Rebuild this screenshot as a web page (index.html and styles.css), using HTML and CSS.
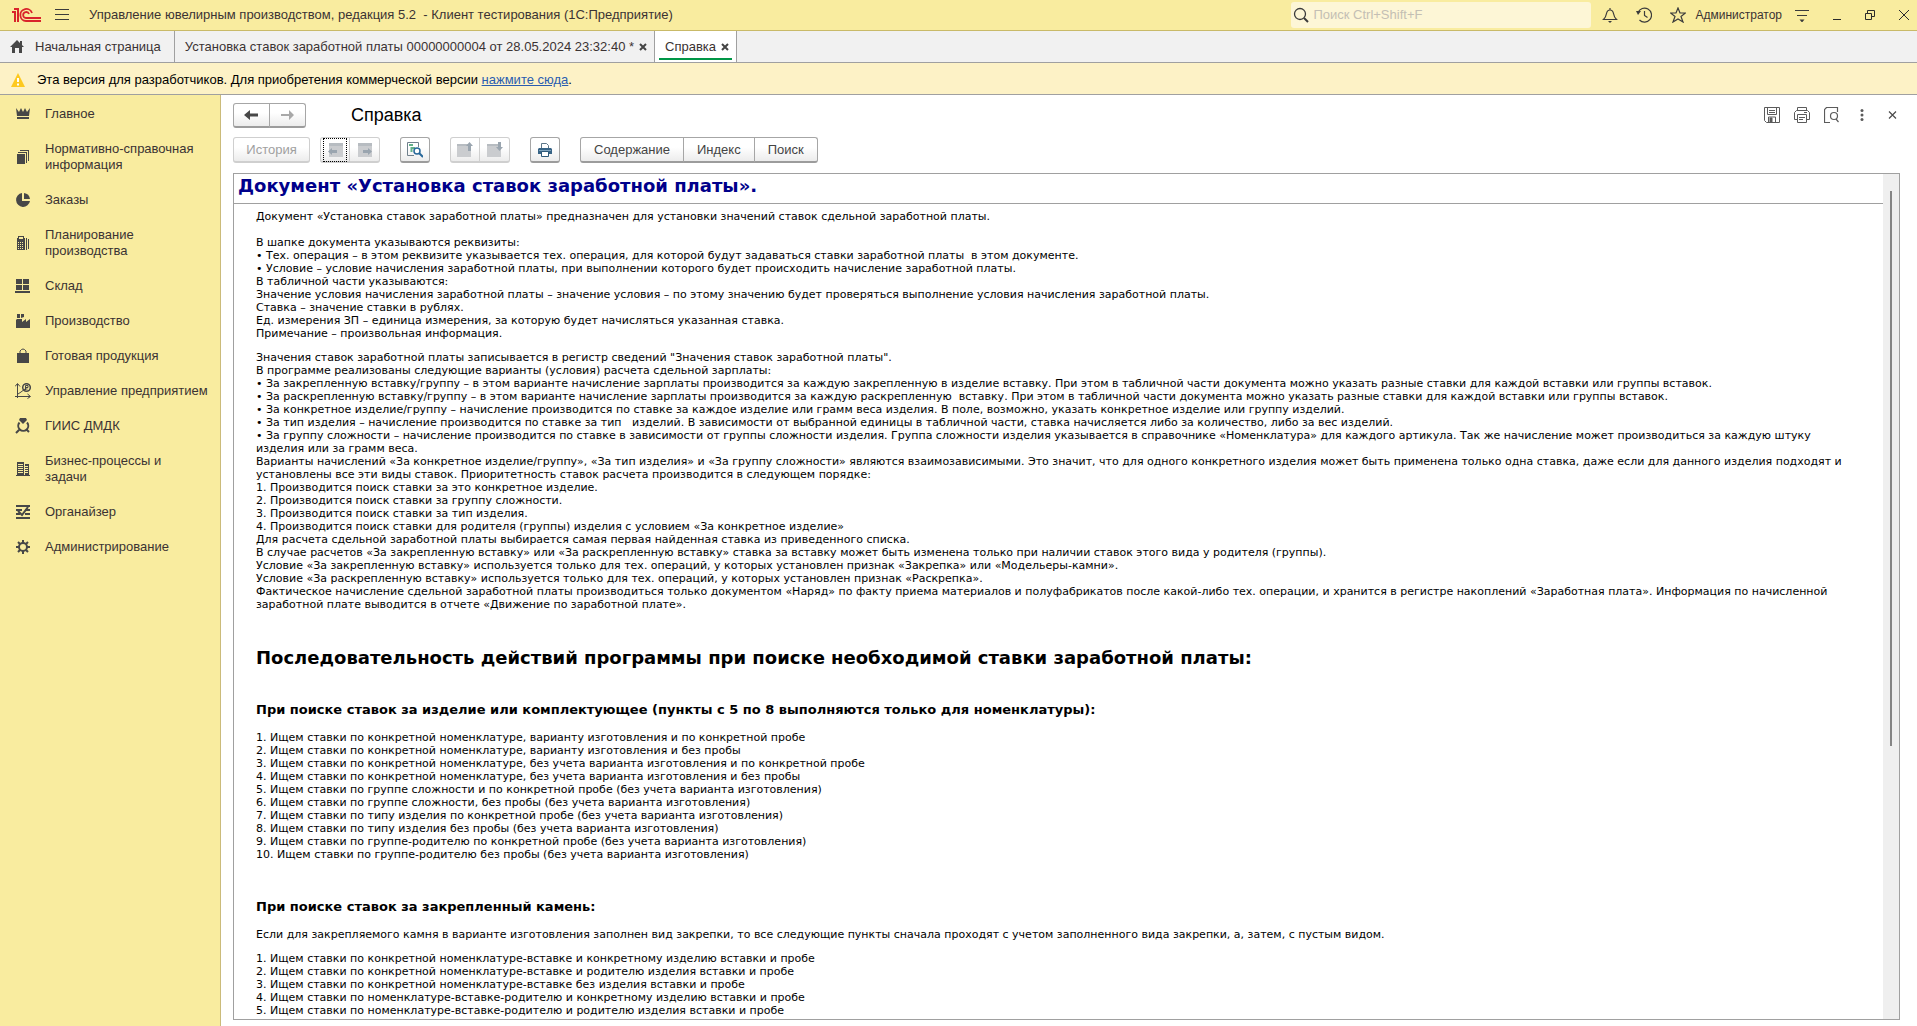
FILE: index.html
```html
<!DOCTYPE html>
<html lang="ru">
<head>
<meta charset="utf-8">
<title>Управление ювелирным производством, редакция 5.2</title>
<link rel="stylesheet" href="styles.css">
</head>
<body>
<header class="titlebar">
  <svg class="logo" width="30" height="16" viewBox="0 0 30 16" fill="none" stroke="#d9242b" stroke-width="2"><path d="M0 5h3v10M2 2h4v13"/><path d="M20 6A6 6 0 1 0 14 14h15M17 7A3 3 0 1 0 14 11h15" stroke-width="1.800"/></svg>
  <button class="icon-btn menu-btn" aria-label="Меню"><svg width="14" height="14" viewBox="0 0 14 14" stroke="#3b3b3b" stroke-width="1"><path d="M0 1.500h14M0 6.500h14M0 11.500h14"/></svg></button>
  <h1 class="app-title">Управление ювелирным производством, редакция 5.2&nbsp; - Клиент тестирования (1С:Предприятие)</h1>
  <div class="search">
    <svg width="16" height="16" viewBox="0 0 16 16" fill="none" stroke="#3b3b3b"><circle cx="7" cy="7" r="5.500" stroke-width="1.300"/><path d="m11 11 4 4" stroke-width="2"/></svg>
    <input type="text" placeholder="Поиск Ctrl+Shift+F" aria-label="Поиск">
  </div>
  <div class="tools">
    <button class="icon-btn" aria-label="Уведомления"><svg width="16" height="16" viewBox="0 0 16 16" fill="none" stroke="#3b3b3b" stroke-width="1.200"><path d="M1.500 12.500c2-2 2.500-3 3-6C5 4 6 3 8 3s3 1 3.500 3.500c.5 3 1 4 3 6zM8 3V1"/><path d="M6 14h4l-2 2z" fill="#3b3b3b" stroke="none"/></svg></button>
    <button class="icon-btn" aria-label="История"><svg width="16" height="16" viewBox="0 0 16 16" fill="none" stroke="#3b3b3b" stroke-width="1.200"><path d="M2 5.500A7 7 0 1 1 3.500 13M8.500 4v4.500l3 2"/><path d="M0 4h5L2 8z" fill="#3b3b3b" stroke="none"/></svg></button>
    <button class="icon-btn" aria-label="Избранное"><svg width="16" height="16" viewBox="0 0 16 16" fill="none" stroke="#3b3b3b" stroke-width="1.200"><path d="m8 1 2 5h5.500l-4.500 3.500 2 5.500L8 12l-5 3L5 9.500.500 6H6z"/></svg></button>
  </div>
  <span class="user">Администратор</span>
  <div class="window-tools">
    <button class="icon-btn" aria-label="Настройки"><svg width="14" height="14" viewBox="0 0 14 14" stroke="#3b3b3b" fill="#3b3b3b"><path d="M0 2.500h14M2 7.500h10"/><path d="M4.500 11.500h5l-2.500 3z" stroke="none"/></svg></button>
    <button class="icon-btn" aria-label="Свернуть"><svg width="10" height="12" viewBox="0 0 10 12" stroke="#2b2b2b"><path d="M1 10.500h8"/></svg></button>
    <button class="icon-btn" aria-label="Развернуть"><svg width="10" height="10" viewBox="0 0 10 10" fill="none" stroke="#2b2b2b"><path d="M.5 3.500h6v6h-6zM2.500 3V.5h7v6H7"/></svg></button>
    <button class="icon-btn" aria-label="Закрыть"><svg width="12" height="12" viewBox="0 0 12 12" stroke="#2b2b2b"><path d="m1 1 10 10M11 1 1 11"/></svg></button>
  </div>
</header>

<nav class="tabs" aria-label="Открытые окна">
  <div class="tab home"><svg width="14" height="14" viewBox="0 0 14 14" fill="#474747"><path d="M7 0 0 7h2v6h3V8h4v5h3V7h2l-2-2V1h-2v2z"/></svg><button class="tab-label">Начальная страница</button></div>
  <div class="tab"><button class="tab-label">Установка ставок заработной платы 00000000004 от 28.05.2024 23:32:40 *</button><button class="icon-btn" aria-label="Закрыть вкладку"><svg width="8" height="8" viewBox="0 0 8 8" stroke="#444" stroke-width="2"><path d="m1 1 6 6M7 1 1 7"/></svg></button></div>
  <div class="tab active"><button class="tab-label">Справка</button><button class="icon-btn" aria-label="Закрыть вкладку"><svg width="8" height="8" viewBox="0 0 8 8" stroke="#444" stroke-width="2"><path d="m1 1 6 6M7 1 1 7"/></svg></button></div>
</nav>

<div class="notice">
  <svg width="14" height="14" viewBox="0 0 14 14"><path d="M7 0 14 14H0z" fill="#fdc91f"/><path d="M7 5v4M7 10.500v2" stroke="#fff" stroke-width="2"/></svg>
  <p>Эта версия для разработчиков. Для приобретения коммерческой версии <a href="#">нажмите сюда</a>.</p>
</div>

<div class="workspace">
  <nav class="sidebar" aria-label="Разделы">
    <a href="#"><svg width="16" height="16" viewBox="0 0 16 16"><path d="M1 2l3 4 2-4 2 4 2-4 2 4 3-4-1 8H2zM2 11h12v2H2z"/></svg><span>Главное</span></a>
    <a href="#"><svg width="16" height="16" viewBox="0 0 16 16"><path d="M2 5h8v10H2zM3 3h9v11h-1V4H3zM5 1h9v11h-1V2H5z"/></svg><span>Нормативно-справочная информация</span></a>
    <a href="#"><svg width="16" height="16" viewBox="0 0 16 16"><path d="M7 1v8h8a7 7 0 1 1-8-8z"/><path d="M9 1a7 7 0 0 1 6 6H9z"/></svg><span>Заказы</span></a>
    <a href="#"><svg width="16" height="16" viewBox="0 0 16 16"><path d="M3 1h6v2h1v12H2V3h1zm1 1v2h4V2zM11 3h1v12h-1zM13 4h1v10h-1z"/><path d="M3 7h1v1H3zM5 7h1v1H5zM7 7h1v1H7zM3 9h1v1H3zM5 9h1v1H5zM7 9h1v1H7zM3 11h1v1H3zM5 11h1v1H5zM7 11h1v1H7zM3 13h1v1H3zM5 13h1v1H5zM7 13h1v1H7z" fill="#f9ec9f"/></svg><span>Планирование производства</span></a>
    <a href="#"><svg width="16" height="16" viewBox="0 0 16 16"><path d="M1 1h6v5H1zM8 1h6v5H8zM1 7h6v5H1zM8 7h6v5H8zM0 13h15v2H0z"/></svg><span>Склад</span></a>
    <a href="#"><svg width="16" height="16" viewBox="0 0 16 16"><path d="M1 15V7l1-1h5v3l4-3v3l4-3v9zM2 1h3v4H2zM6 1h3v3L6 5z"/></svg><span>Производство</span></a>
    <a href="#"><svg width="16" height="16" viewBox="0 0 16 16"><path d="M2 5h12v10H2z"/><path d="M5 7V3q3-4 6 0v4" fill="none" stroke="#474747"/></svg><span>Готовая продукция</span></a>
    <a href="#"><svg width="16" height="16" viewBox="0 0 16 16"><path d="M2.500 15V1M0 13.500h15M0 3.500l2.500-3 2.500 3M12.500 11l3 2.500-3 2M3 11l3-2 4-3" fill="none" stroke="#474747"/><circle cx="11.500" cy="4.500" r="3.800" fill="none" stroke="#474747" stroke-width="1.500"/><path d="M10.500 7V2.500H13v2h-3M10 6h2.500" fill="none" stroke="#474747"/></svg><span>Управление предприятием</span></a>
    <a href="#"><svg width="16" height="16" viewBox="0 0 16 16"><path d="M5 0h6l1 2-4 4-4-4z"/><path d="M4.500 4.500A5 5 0 1 0 12 4.500M1 15l3-3M12 12l2 2" fill="none" stroke="#474747" stroke-width="2"/></svg><span>ГИИС ДМДК</span></a>
    <a href="#"><svg width="16" height="16" viewBox="0 0 16 16"><path d="M2 1h7v13H2zM10 3h4v11h-4zM1 14h14v1H1z"/><path d="M3 3.500h5M3 5.500h5M3 7.500h5M3 9.500h5M3 11.500h5M10 5.500h3M10 7.500h3M10 9.500h3M10 11.500h3" stroke="#f9ec9f"/></svg><span>Бизнес-процессы и<br>задачи</span></a>
    <a href="#"><svg width="16" height="16" viewBox="0 0 16 16"><path d="M1 2h14M1 6h6M10 6h5M1 10h4M10 10h5M1 14h14M3 7l4 4 6-8" fill="none" stroke="#474747" stroke-width="2"/></svg><span>Органайзер</span></a>
    <a href="#"><svg width="16" height="16" viewBox="0 0 16 16" fill="none" stroke="#474747" stroke-width="2"><circle cx="8" cy="8" r="4" fill="none"/><path d="M8 1v3M8 12v3M1 8h3M12 8h3M3 3l2 2M11 11l2 2M13 3l-2 2M5 11l-2 2"/></svg><span>Администрирование</span></a>
  </nav>

  <main class="form">
    <div class="form-head">
      <div class="group">
        <button class="btn nav-btn" aria-label="Назад"><svg width="15" height="10" viewBox="0 0 15 10"><path d="M6 0v3.500h8v3H6V10L0 5z" fill="#474747"/></svg></button>
        <button class="btn nav-btn" aria-label="Вперед" disabled><svg width="15" height="10" viewBox="0 0 15 10"><path d="M9 0v4H1v2h8v4l5-5z" fill="#a8a8a8"/></svg></button>
      </div>
      <h2 class="form-title">Справка</h2>
      <div class="form-tools">
        <button class="icon-btn" aria-label="Сохранить"><svg width="16" height="16" viewBox="0 0 16 16" fill="none" stroke="#5b5b5b"><path d="M.5.5h15v15H2.500l-2-2zM3.500.5v7h9v-7M5 3.500h6M5 5.500h6M4.500 15v-5h7v5"/><path d="M6 11h2v4H6z" fill="#5b5b5b"/></svg></button>
        <button class="icon-btn" aria-label="Печать"><svg width="16" height="16" viewBox="0 0 16 16" fill="none" stroke="#5b5b5b"><path d="M3.500 3.500v-3h9v3M3.500 12.500h-3v-7l2-2h11l2 2v7h-3M3.500 7.500h9v8h-9zM5 10.500h6M5 12.500h4M10 5.500h3"/></svg></button>
        <button class="icon-btn" aria-label="Просмотр"><svg width="16" height="16" viewBox="0 0 16 16" fill="none" stroke="#5b5b5b"><path d="M6 15.500H.5V2.500l2-2h11V5M12 12l2.500 3" stroke-width="1.200"/><circle cx="10" cy="9" r="3.500" stroke-width="1.200"/></svg></button>
        <button class="icon-btn" aria-label="Еще"><svg width="16" height="16" viewBox="0 0 16 16" fill="#5b5b5b"><circle cx="8" cy="3.500" r="1.500"/><circle cx="8" cy="8" r="1.500"/><circle cx="8" cy="12.500" r="1.500"/></svg></button>
        <button class="icon-btn" aria-label="Закрыть"><svg width="16" height="16" viewBox="0 0 16 16" stroke="#4b4b4b" stroke-width="1.200"><path d="m5 4.500 7 7M12 4.500l-7 7"/></svg></button>
      </div>
    </div>

    <div class="toolbar">
      <button class="btn history" disabled>История</button>
      <div class="group">
        <button class="btn tool focused" aria-label="Предыдущая" disabled><svg width="16" height="16" viewBox="0 0 16 16"><path d="M2 1h14v14H2z" fill="#cacccf"/><path d="M2 1h14v3H2z" fill="#b7bcc1"/><path d="M5 6v2h5v3H5v2L1 9.500z" fill="#9aa5af"/></svg></button>
        <button class="btn tool" aria-label="Следующая" disabled><svg width="16" height="16" viewBox="0 0 16 16"><path d="M1 1h14v14H1z" fill="#cacccf"/><path d="M1 1h14v3H1z" fill="#b7bcc1"/><path d="M11 6v2H6v3h5v2l4-3.500z" fill="#9aa5af"/></svg></button>
      </div>
      <button class="btn tool" aria-label="Найти в содержании"><svg width="16" height="16" viewBox="0 0 16 16" fill="none"><path d="M7 13.500H.5V.5h11V5" stroke="#70808c"/><path d="M2 3h4M4.500 5v5M5 6h3" stroke="#62b08a" stroke-width="2"/><circle cx="10" cy="9" r="3" fill="#fff" stroke="#28689a" stroke-width="1.500"/><path d="m12 11 4 4" stroke="#28689a" stroke-width="2"/></svg></button>
      <div class="group">
        <button class="btn tool" aria-label="Вверх" disabled><svg width="16" height="16" viewBox="0 0 16 16"><path d="M0 2h14v13H0z" fill="#cacccf"/><path d="M0 2h14v2H0z" fill="#b7bcc1"/><path d="M12.500 0 9 4h2v5h3V4h2z" fill="#9aa5af"/></svg></button>
        <button class="btn tool" aria-label="Вниз" disabled><svg width="16" height="16" viewBox="0 0 16 16"><path d="M0 2h14v13H0z" fill="#cacccf"/><path d="M0 2h14v2H0z" fill="#b7bcc1"/><path d="M11 0h3v5h2l-3.500 4L9 5h2z" fill="#9aa5af"/></svg></button>
      </div>
      <button class="btn tool" aria-label="Печать"><svg width="16" height="16" viewBox="0 0 16 16"><path d="M4.500 6V1.500h5l2 2V6" fill="#fff" stroke="#5d7688"/><path d="M2 6h12l1 1v5H1V7z" fill="#386486"/><path d="M2 8.500h12" stroke="#7fa3bd"/><path d="M4.500 9.500h7v5h-7z" fill="#fff" stroke="#2d5878"/></svg></button>
      <div class="group text-group">
        <button class="btn">Содержание</button><button class="btn">Индекс</button><button class="btn">Поиск</button>
      </div>
    </div>

    <section class="viewer">
      <article class="doc">
        <h1>Документ «Установка ставок заработной платы».</h1>
        <div class="doc-body">
          <p>Документ «Установка ставок заработной платы» предназначен для установки значений ставок сдельной заработной платы.<br><br>
          В шапке документа указываются реквизиты:<br>
          • Тех. операция – в этом реквизите указывается тех. операция, для которой будут задаваться ставки заработной платы&nbsp; в этом документе.<br>
          • Условие – условие начисления заработной платы, при выполнении которого будет происходить начисление заработной платы.<br>
          В табличной части указываются:<br>
          Значение условия начисления заработной платы – значение условия – по этому значению будет проверяться выполнение условия начисления заработной платы.<br>
          Ставка – значение ставки в рублях.<br>
          Ед. измерения ЗП – единица измерения, за которую будет начисляться указанная ставка.<br>
          Примечание – произвольная информация.</p>
          <p>Значения ставок заработной платы записывается в регистр сведений "Значения ставок заработной платы".<br>
          В программе реализованы следующие варианты (условия) расчета сдельной зарплаты:<br>
          • За закрепленную вставку/группу – в этом варианте начисление зарплаты производится за каждую закрепленную в изделие вставку. При этом в табличной части документа можно указать разные ставки для каждой вставки или группы вставок.<br>
          • За раскрепленную вставку/группу – в этом варианте начисление зарплаты производится за каждую раскрепленную&nbsp; вставку. При этом в табличной части документа можно указать разные ставки для каждой вставки или группы вставок.<br>
          • За конкретное изделие/группу – начисление производится по ставке за каждое изделие или грамм веса изделия. В поле, возможно, указать конкретное изделие или группу изделий.<br>
          • За тип изделия – начисление производится по ставке за тип&nbsp;&nbsp; изделий. В зависимости от выбранной единицы в табличной части, ставка начисляется либо за количество, либо за вес изделий.<br>
          • За группу сложности – начисление производится по ставке в зависимости от группы сложности изделия. Группа сложности изделия указывается в справочнике «Номенклатура» для каждого артикула. Так же начисление может производиться за каждую штуку изделия или за грамм веса.<br>
          Варианты начислений «За конкретное изделие/группу», «За тип изделия» и «За группу сложности» являются взаимозависимыми. Это значит, что для одного конкретного изделия может быть применена только одна ставка, даже если для данного изделия подходят и установлены все эти виды ставок. Приоритетность ставок расчета производится в следующем порядке:<br>
          1. Производится поиск ставки за это конкретное изделие.<br>
          2. Производится поиск ставки за группу сложности.<br>
          3. Производится поиск ставки за тип изделия.<br>
          4. Производится поиск ставки для родителя (группы) изделия с условием «За конкретное изделие»<br>
          Для расчета сдельной заработной платы выбирается самая первая найденная ставка из приведенного списка.<br>
          В случае расчетов «За закрепленную вставку» или «За раскрепленную вставку» ставка за вставку может быть изменена только при наличии ставок этого вида у родителя (группы).<br>
          Условие «За закрепленную вставку» используется только для тех. операций, у которых установлен признак «Закрепка» или «Модельеры-камни».<br>
          Условие «За раскрепленную вставку» используется только для тех. операций, у которых установлен признак «Раскрепка».<br>
          Фактическое начисление сдельной заработной платы производиться только документом «Наряд» по факту приема материалов и полуфабрикатов после какой-либо тех. операции, и хранится в регистре накоплений «Заработная плата». Информация по начисленной заработной плате выводится в отчете «Движение по заработной плате».</p>
          <h2>Последовательность действий программы при поиске необходимой ставки заработной платы:</h2>
          <h3>При поиске ставок за изделие или комплектующее (пункты с 5 по 8 выполняются только для номенклатуры):</h3>
          <p>1. Ищем ставки по конкретной номенклатуре, варианту изготовления и по конкретной пробе<br>
          2. Ищем ставки по конкретной номенклатуре, варианту изготовления и без пробы<br>
          3. Ищем ставки по конкретной номенклатуре, без учета варианта изготовления и по конкретной пробе<br>
          4. Ищем ставки по конкретной номенклатуре, без учета варианта изготовления и без пробы<br>
          5. Ищем ставки по группе сложности и по конкретной пробе (без учета варианта изготовления)<br>
          6. Ищем ставки по группе сложности, без пробы (без учета варианта изготовления)<br>
          7. Ищем ставки по типу изделия по конкретной пробе (без учета варианта изготовления)<br>
          8. Ищем ставки по типу изделия без пробы (без учета варианта изготовления)<br>
          9. Ищем ставки по группе-родителю по конкретной пробе (без учета варианта изготовления)<br>
          10. Ищем ставки по группе-родителю без пробы (без учета варианта изготовления)</p>
          <h3>При поиске ставок за закрепленный камень:</h3>
          <p>Если для закрепляемого камня в варианте изготовления заполнен вид закрепки, то все следующие пункты сначала проходят с учетом заполненного вида закрепки, а, затем, с пустым видом.</p>
          <p>1. Ищем ставки по конкретной номенклатуре-вставке и конкретному изделию вставки и пробе<br>
          2. Ищем ставки по конкретной номенклатуре-вставке и родителю изделия вставки и пробе<br>
          3. Ищем ставки по конкретной номенклатуре-вставке без изделия вставки и пробе<br>
          4. Ищем ставки по номенклатуре-вставке-родителю и конкретному изделию вставки и пробе<br>
          5. Ищем ставки по номенклатуре-вставке-родителю и родителю изделия вставки и пробе<br>
          6. Ищем ставки по номенклатуре-вставке-родителю без изделия вставки и пробе</p>
        </div>
      </article>
      <div class="scrollbar"><div class="thumb"></div></div>
    </section>
  </main>
</div>
</body>
</html>
```
FILE: styles.css
```css
* { box-sizing: border-box; }

body {
  margin: 0;
  height: 100vh;
  display: flex;
  flex-direction: column;
  overflow: hidden;
  background: #fff;
  color: #3b3333;
  font: 13px/16px "Liberation Sans", Arial, sans-serif;
}

button { font: inherit; color: inherit; }
svg { display: block; flex: none; }
h1, h2, h3, p { margin: 0; font-weight: normal; }

.icon-btn {
  display: flex;
  padding: 0;
  border: 0;
  background: none;
}

/* Title bar */
.titlebar {
  flex: none;
  display: flex;
  align-items: center;
  height: 31px;
  padding: 0 7px 0 12px;
  background: #f9ec9f;
  border-bottom: 1px solid #c9ba68;
}
.menu-btn { margin: 0 20px 0 13px; }
.app-title { flex: 1; font-size: 13px; white-space: nowrap; }
.search {
  display: flex;
  align-items: center;
  width: 300px;
  height: 26px;
  padding: 0 2px;
  gap: 4px;
  border-radius: 3px;
  background: #fdf6d6;
}
.search input {
  flex: 1;
  min-width: 0;
  padding: 0;
  border: 0;
  background: none;
  font: inherit;
  outline: 0;
}
.search input::placeholder { color: #c4bfb4; }
.tools { display: flex; gap: 18px; margin: 0 9px 0 11px; }
.user { font-size: 12px; }
.window-tools {
  display: flex;
  align-items: center;
  gap: 23px;
  margin-left: 13px;
}

/* Open windows */
.tabs {
  flex: none;
  display: flex;
  height: 32px;
  background: #f1f1f1;
  border-bottom: 1px solid #a0a0a0;
}
.tab {
  display: flex;
  align-items: center;
  gap: 5px;
  padding: 0 7px 0 10px;
  border-right: 1px solid #a0a0a0;
}
.tab.home { gap: 11px; padding-right: 13px; }
.tab-label { padding: 0; border: 0; background: none; white-space: nowrap; }
.tab.active {
  background: linear-gradient(#009646, #009646) 4px 27px / calc(100% - 8px) 2px no-repeat #fff;
}

/* Notice */
.notice {
  flex: none;
  display: flex;
  align-items: center;
  gap: 12px;
  height: 32px;
  padding: 2px 11px 0;
  background: #fdf2c6;
  border-bottom: 1px solid #a0a0a0;
  color: #000;
}
.notice a { color: #2a5db0; }

.workspace { flex: 1; display: flex; min-height: 0; }

/* Sections */
.sidebar {
  flex: none;
  display: flex;
  flex-direction: column;
  gap: 19px;
  width: 221px;
  padding: 11px 12px 0 15px;
  background: #f9ec9f;
  border-right: 1px solid #cbbb7a;
}
.sidebar a {
  display: flex;
  align-items: center;
  gap: 14px;
  color: inherit;
  text-decoration: none;
}
.sidebar svg { fill: #474747; }

/* Form */
.form {
  flex: 1;
  min-width: 0;
  display: flex;
  flex-direction: column;
  padding: 8px 17px 6px 12px;
}
.form-head { display: flex; align-items: center; height: 24px; }
.form-title { flex: 1; margin-left: 45px; font-size: 18px; line-height: 24px; color: #000; }
.form-tools { display: flex; gap: 14px; }

.btn {
  display: flex;
  align-items: center;
  justify-content: center;
  height: 26px;
  padding: 0 13px;
  border: 1px solid #a6a6a6;
  border-bottom: 2px solid #9c9c9c;
  border-radius: 3px;
  background: linear-gradient(#fff 40%, #ececec);
  color: #444;
}
.btn:disabled { border-color: #cfcfcf; color: #a0a0a0; }
.tool { width: 30px; padding: 0; }
.nav-btn { width: 37px; height: 25px; padding: 0; }
.nav-btn:disabled { border-color: #a6a6a6 #a6a6a6 #9c9c9c; }
.group { display: flex; }
.group .btn + .btn { margin-left: -1px; border-top-left-radius: 0; border-bottom-left-radius: 0; }
.group .btn:not(:last-child) { border-top-right-radius: 0; border-bottom-right-radius: 0; }
.group .tool:last-child { width: 31px; }
.focused svg { outline: 1px dotted #000; outline-offset: 3px; }
.history { width: 77px; }

.toolbar { display: flex; gap: 20px; margin: 10px 0; }
.toolbar > .history { margin-right: -10px; }

/* Help viewer */
.viewer {
  flex: 1;
  min-height: 0;
  display: flex;
  border: 1px solid #a0a0a0;
  background: #fff;
}
.doc {
  flex: 1;
  overflow: hidden;
  color: #000;
  font: 11px/13px Verdana, "DejaVu Sans", sans-serif;
}
.doc h1 {
  padding: 0 4px 6px;
  border-bottom: 1px solid #a0a0a0;
  color: #00008b;
  font-size: 18px;
  line-height: 23px;
  font-weight: bold;
}
.doc-body { padding: 6px 24px 0 22px; }
.doc-body p { margin-bottom: 11px; }
.doc-body h2 { margin: 36px 0 32px; font-size: 18px; line-height: 22px; font-weight: bold; }
.doc-body h3 { margin: 37px 0 13px; font-size: 13px; line-height: 17px; font-weight: bold; }
.doc-body h2 + h3 { margin-top: 32px; }

.scrollbar { flex: none; width: 16px; padding: 17px 7px 0; background: #efefef; }
.thumb { height: 67%; background: #858585; }
```
